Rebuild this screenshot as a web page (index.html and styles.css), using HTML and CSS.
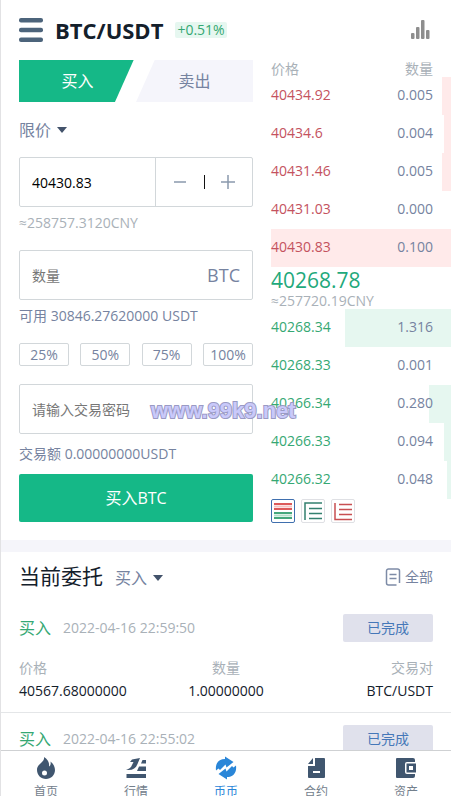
FILE: index.html
```
<!DOCTYPE html>
<html lang="zh-CN">
<head>
    <meta charset="UTF-8">
    <meta name="viewport" content="width=device-width, initial-scale=1.0">
    <title>BTC/USDT</title>
    <link rel="stylesheet" href="styles.css">
</head>
<body>
    <div class="app">
        <main class="content">
            <header class="topbar">
                <button type="button" aria-label="菜单">
                    <svg width="24" height="24" viewBox="0 0 24 24" fill="#4c647b">
                        <rect y="0" width="24" height="4.5" rx="2"/>
                        <rect y="9.75" width="24" height="4.5" rx="2"/>
                        <rect y="19.5" width="24" height="4.5" rx="2"/>
                    </svg>
                </button>
                <h1>BTC/USDT</h1>
                <span class="change">+0.51%</span>
                <button type="button" class="chart-btn" aria-label="K线">
                    <svg width="22" height="20" viewBox="0 0 22 20" fill="#8e8e8e">
                        <rect x="0" y="13" width="3.5" height="6" rx="1"/>
                        <rect x="5" y="7" width="3.5" height="12" rx="1"/>
                        <rect x="10" y="0" width="3.5" height="19" rx="1"/>
                        <rect x="15" y="10" width="3.5" height="9" rx="1"/>
                    </svg>
                </button>
            </header>

            <div class="trade">
                <form class="trade-form">
                    <div class="tabs">
                        <button type="button" class="tab tab-buy">买入</button>
                        <button type="button" class="tab tab-sell">卖出</button>
                    </div>

                    <button type="button" class="dropdown order-type">限价 <span class="caret"></span></button>

                    <div class="field">
                        <input type="text" class="price-input" aria-label="价格" value="40430.83">
                        <div class="stepper">
                            <button type="button" aria-label="减少">
                                <svg width="14" height="14" viewBox="0 0 14 14" stroke="#8a99ad" stroke-width="1.5"><path d="M1 7h12"/></svg>
                            </button>
                            <span class="bar"></span>
                            <button type="button" aria-label="增加">
                                <svg width="14" height="14" viewBox="0 0 14 14" stroke="#8a99ad" stroke-width="1.5"><path d="M0 7h14M7 0v14"/></svg>
                            </button>
                        </div>
                    </div>
                    <p class="approx">≈258757.3120CNY</p>

                    <div class="field">
                        <input type="text" aria-label="数量" placeholder="数量">
                        <span class="unit">BTC</span>
                    </div>
                    <p class="available">可用 30846.27620000 USDT</p>

                    <div class="percents">
                        <button type="button">25%</button>
                        <button type="button">50%</button>
                        <button type="button">75%</button>
                        <button type="button">100%</button>
                    </div>

                    <div class="field">
                        <input type="password" aria-label="交易密码" placeholder="请输入交易密码">
                    </div>
                    <p class="total">交易额 0.00000000USDT</p>

                    <button type="submit" class="submit">买入BTC</button>
                    <span class="watermark">www.99k9.net</span>
                </form>

                <section class="book">
                    <div class="book-head"><span>价格</span><span>数量</span></div>
                    <ul class="asks">
                        <li><i style="width: 5%"></i><span>40434.92</span><b>0.005</b></li>
                        <li><i style="width: 4%"></i><span>40434.6</span><b>0.004</b></li>
                        <li><i style="width: 5%"></i><span>40431.46</span><b>0.005</b></li>
                        <li><i style="width: 0%"></i><span>40431.03</span><b>0.000</b></li>
                        <li><i style="width: 100%"></i><span>40430.83</span><b>0.100</b></li>
                    </ul>
                    <div class="last-price">40268.78</div>
                    <div class="last-cny">≈257720.19CNY</div>
                    <ul class="bids">
                        <li><i style="width: 59%"></i><span>40268.34</span><b>1.316</b></li>
                        <li><i style="width: 0%"></i><span>40268.33</span><b>0.001</b></li>
                        <li><i style="width: 12%"></i><span>40266.34</span><b>0.280</b></li>
                        <li><i style="width: 4%"></i><span>40266.33</span><b>0.094</b></li>
                        <li><i style="width: 2%"></i><span>40266.32</span><b>0.048</b></li>
                    </ul>
                    <div class="views">
                        <button type="button" class="active" aria-label="全部盘口">
                            <svg width="22" height="22" viewBox="0 0 22 22" stroke-width="2">
                                <path stroke="#f7c4c4" d="M2 6.5h18"/>
                                <path stroke="#dd5a5a" d="M2 4h18M2 9h18"/>
                                <path stroke="#b5e0ca" d="M2 15.5h18"/>
                                <path stroke="#45a77c" d="M2 13h18M2 18h18"/>
                            </svg>
                        </button>
                        <button type="button" aria-label="买盘">
                            <svg width="22" height="22" viewBox="0 0 22 22" fill="none" stroke="#33806f" stroke-width="1.5">
                                <path d="M3 20V3h17M7 8.500h13M7 13.500h13M7 18.500h13"/>
                            </svg>
                        </button>
                        <button type="button" aria-label="卖盘">
                            <svg width="22" height="22" viewBox="0 0 22 22" fill="none" stroke="#c84f52" stroke-width="1.5">
                                <path d="M3 3v16.500h17M7 4.500h13M7 9.500h13M7 14.500h13"/>
                            </svg>
                        </button>
                    </div>
                </section>
            </div>

            <section class="orders">
                <div class="orders-head">
                    <div class="orders-title">
                        <h2>当前委托</h2>
                        <button type="button" class="dropdown">买入 <span class="caret"></span></button>
                    </div>
                    <a href="#" class="all">
                        <svg width="16" height="18" viewBox="0 0 16 18" fill="none" stroke="#7d8ba6" stroke-width="1.5">
                            <path d="M14.500 15V3a2 2 0 0 0-2-2h-9a2 2 0 0 0-2 2v12a2 2 0 0 0 2 2h8M4.500 6.500h7M4.500 10.500h7"/>
                        </svg>
                        全部
                    </a>
                </div>

                <article class="order">
                    <div class="order-top">
                        <span class="side">买入</span>
                        <time>2022-04-16 22:59:50</time>
                        <span class="status">已完成</span>
                    </div>
                    <dl>
                        <div><dt>价格</dt><dd>40567.68000000</dd></div>
                        <div><dt>数量</dt><dd>1.00000000</dd></div>
                        <div><dt>交易对</dt><dd>BTC/USDT</dd></div>
                    </dl>
                </article>

                <article class="order">
                    <div class="order-top">
                        <span class="side">买入</span>
                        <time>2022-04-16 22:55:02</time>
                        <span class="status">已完成</span>
                    </div>
                </article>
            </section>
        </main>

        <nav class="tabbar">
            <a href="#">
                <svg width="24" height="24" viewBox="0 0 24 24" fill="#40566f">
                    <path fill-rule="evenodd" d="M10 1c4 2.500 5.500 5.500 5 9.500 1.500-1 2-2.500 1.500-5 3 2.500 4.500 5.500 4.500 8.500 0 5-4 9-9 9s-9-4-9-9c0-4 2.500-5.500 4.500-7.500C9 5 10.500 3.500 10 1zM10.500 14.500a2.500 2.500 0 1 0 0 5 2.500 2.500 0 0 0 0-5z"/>
                </svg>
                首页
            </a>
            <a href="#">
                <svg width="24" height="24" viewBox="0 0 24 24" fill="#40566f">
                    <path d="M2.500 18h19.500v4H2.500zM2 13.500c3.500-.5 5-2 6-4.500l1.500-3H6l2-2.500 8-1.500-2.500 6c-1.500 4-4.500 6-9 6zM18.500 4H22v3.500h-5zM15 10.500h7V15h-9z"/>
                </svg>
                行情
            </a>
            <a href="#" class="current">
                <svg width="24" height="24" viewBox="0 0 24 24" fill="#2a86d8">
                    <path d="M2 14.500C1 7 5 3 11 3V.5l8.500 5.500-7 5.500-1-3L6 14l-1.500-1.500zM22 9.500C23 17 19 21 13 21v2.500L4.500 18l7-5.500 1 3L18 10l1.500 1.500z"/>
                </svg>
                币币
            </a>
            <a href="#">
                <svg width="24" height="24" viewBox="0 0 24 24" fill="#40566f">
                    <path fill-rule="evenodd" d="M11 2h9a1 1 0 0 1 1 1v18a1 1 0 0 1-1 1H5a1 1 0 0 1-1-1V10h7zM9 2v6H4zM9 15v2h7v-2z"/>
                </svg>
                合约
            </a>
            <a href="#">
                <svg width="24" height="24" viewBox="0 0 24 24" fill="#40566f">
                    <path d="M3 2h16a2 2 0 0 1 2 2v2h-8a2 2 0 0 0-2 2v8a2 2 0 0 0 2 2h8v2a2 2 0 0 1-2 2H3a1 1 0 0 1-1-1V3a1 1 0 0 1 1-1z"/>
                    <path fill-rule="evenodd" d="M12.500 7.500H22v9h-9.500zM15 10v4h4v-4z"/>
                </svg>
                资产
            </a>
        </nav>
    </div>
</body>
</html>
```

FILE: styles.css
```
* {
    box-sizing: border-box;
    margin: 0;
    padding: 0;
}

body {
    font-family: 'Open Sans', 'Noto Sans CJK SC', sans-serif;
    font-size: 14px;
    line-height: 20px;
    color: #14202b;
    background-color: #fff;
}

button,
input {
    font: inherit;
    color: inherit;
    background: none;
    border: none;
}

button {
    cursor: pointer;
}

a {
    color: inherit;
    text-decoration: none;
}

ul {
    list-style: none;
}

svg {
    display: block;
}

.app {
    display: flex;
    flex-direction: column;
    height: 100vh;
    border-left: 1px solid #e2e2e4;
}

.content {
    flex: 1;
    min-height: 0;
    overflow: hidden;
}

/* header */
.topbar {
    display: flex;
    align-items: center;
    gap: 12px;
    height: 60px;
    padding: 0 18px;
}

h1 {
    font-size: 22px;
    font-weight: 700;
    line-height: 28px;
}

.change {
    padding: 0 2px;
    line-height: 16px;
    color: #35a873;
    background-color: #e6f7f0;
    border-radius: 2px;
}

.chart-btn {
    margin-left: auto;
}

/* trade form */
.trade {
    display: flex;
    border-bottom: 12px solid #f5f5fa;
    padding-bottom: 17px;
}

.trade-form {
    position: relative;
    width: 60%;
    padding: 0 18px;
    color: #7683a0;
}

.tabs {
    display: flex;
    height: 42px;
    font-size: 16px;
}

.tab {
    flex: 1;
}

.tab-buy {
    color: #fff;
    background-color: #15b887;
    clip-path: polygon(0 0, 98% 0, 82% 100%, 0 100%);
}

.tab-sell {
    background-color: #f5f5fb;
    clip-path: polygon(16% 0, 100% 0, 100% 100%, 0 100%);
}

.dropdown {
    display: flex;
    align-items: center;
    gap: 6px;
    font-size: 16px;
    color: #7683a0;
}

.order-type {
    height: 55px;
}

.caret {
    border: 5px solid transparent;
    border-top: 6px solid #43536b;
    border-bottom: 0;
}

.field {
    display: flex;
    align-items: center;
    height: 50px;
    border: 1px solid #d2d7da;
    border-radius: 2px;
}

.field input {
    flex: 1;
    min-width: 0;
    height: 100%;
    padding: 0 12px;
    outline: none;
}

.field input::placeholder {
    color: #777;
}

.field .price-input {
    color: #000;
}

.stepper {
    display: flex;
    align-items: center;
    justify-content: space-between;
    width: 97px;
    height: 100%;
    padding: 0 17px;
    border-left: 1px solid #d2d7da;
}

.bar {
    width: 1px;
    height: 14px;
    background-color: #111;
}

.unit {
    padding-right: 12px;
    font-size: 18px;
}

.approx {
    padding: 6px 0 17px;
    color: #a9b1b8;
}

.available {
    padding: 6px 0 17px;
}

.percents {
    display: flex;
    justify-content: space-between;
    margin-bottom: 18px;
}

.percents button {
    width: 50px;
    height: 23px;
    line-height: 20px;
    border: 1px solid #d2d7da;
    border-radius: 2px;
}

.total {
    padding: 10px 0;
}

.submit {
    width: 100%;
    height: 48px;
    font-size: 16px;
    color: #fff;
    background-color: #15b887;
    border-radius: 2px;
}

/* site mark printed over the form */
.watermark {
    position: absolute;
    top: 341px;
    left: 150px;
    z-index: 1;
    font-family: 'Liberation Sans', Arial, sans-serif;
    font-size: 22px;
    font-weight: bold;
    color: #c9c9fa;
    -webkit-text-stroke: 2px #9a9ac4;
    paint-order: stroke fill;
    pointer-events: none;
}

/* order book */
.book {
    width: 40%;
    color: #7683a0;
}

.book-head {
    display: flex;
    justify-content: space-between;
    padding-right: 18px;
    line-height: 17px;
    color: #a9b1b8;
}

.book li {
    position: relative;
    display: flex;
    justify-content: space-between;
    padding: 0 18px 2px 0;
    line-height: 36px;
}

.book li i {
    position: absolute;
    top: 0;
    right: 0;
    height: 100%;
}

.book li span,
.book li b {
    position: relative;
    font-weight: normal;
}

.asks i {
    background-color: #ffeaea;
}

.asks span {
    color: #c4525e;
}

.bids i {
    background-color: #e6f7f0;
}

.bids span {
    color: #35a873;
}

.last-price {
    font-size: 21px;
    line-height: 26px;
    color: #1fa97c;
}

.last-cny {
    line-height: 16px;
    color: #a9b1b8;
}

.views {
    display: flex;
    gap: 6px;
}

.views button {
    width: 24px;
    height: 24px;
    border: 1px solid #dfe0e4;
    border-radius: 2px;
}

.views .active {
    border-color: #3f6fae;
}

/* orders */
.orders-head {
    display: flex;
    align-items: center;
    justify-content: space-between;
    height: 50px;
    padding: 0 18px;
}

.orders-title {
    display: flex;
    align-items: baseline;
    gap: 12px;
}

h2 {
    font-size: 21px;
    font-weight: normal;
}

.all {
    display: flex;
    align-items: center;
    gap: 4px;
    color: #7683a0;
}

.order {
    padding: 12px 18px 8px;
    border-bottom: 1px solid #e4e6e8;
}

.order-top {
    display: flex;
    align-items: center;
    gap: 12px;
    margin-bottom: 16px;
}

.side {
    font-size: 16px;
    color: #35a873;
}

time {
    color: #a9b1b8;
}

.status {
    width: 90px;
    margin-left: auto;
    line-height: 28px;
    text-align: center;
    color: #4577b8;
    background-color: #e0e1ec;
    border-radius: 2px;
}

.order dl {
    display: flex;
}

.order dl div {
    flex: 1;
    text-align: center;
}

.order dl div:first-child {
    text-align: left;
}

.order dl div:last-child {
    text-align: right;
}

dt {
    color: #a9b1b8;
}

dd {
    line-height: 26px;
}

/* bottom navigation */
.tabbar {
    display: flex;
    height: 46px;
    overflow: hidden;
    border-top: 1px solid #cfd1d3;
    background-color: #fff;
}

.tabbar a {
    display: flex;
    flex: 1;
    flex-direction: column;
    align-items: center;
    gap: 2px;
    padding-top: 5px;
    font-size: 12px;
    color: #73808c;
}

.tabbar svg {
    flex-shrink: 0;
}

.tabbar .current {
    color: #2a86d8;
}
```
